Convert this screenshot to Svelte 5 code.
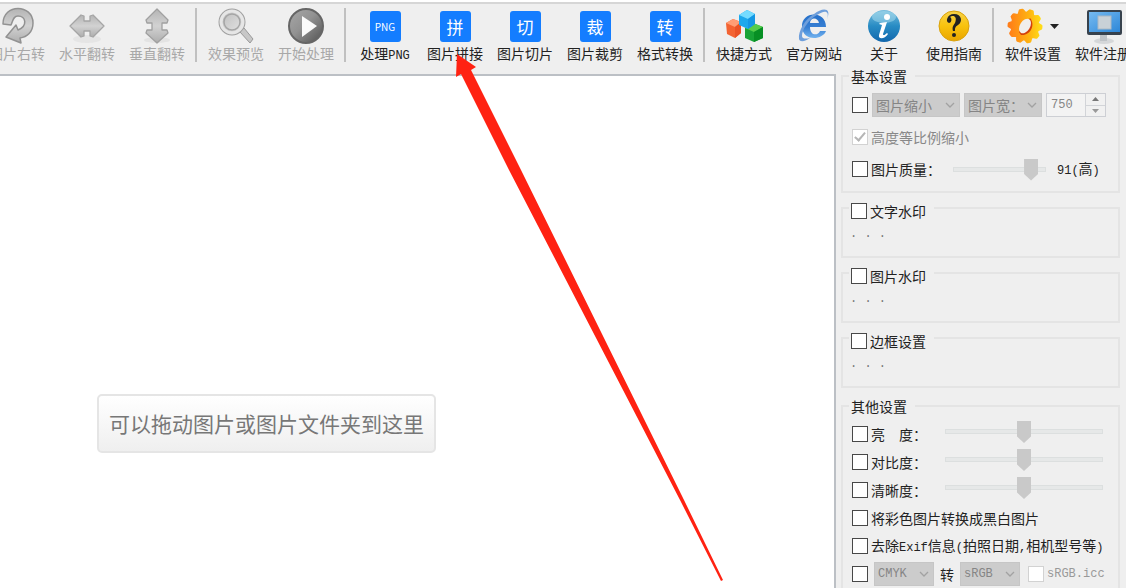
<script lang="ts">
	type Tool = { id: string; label: string; latin?: string; glyph?: string; disabled?: boolean; menu?: boolean };

	const groups: Tool[][] = [
		[
			{ id: 'rotate', label: '图片右转', disabled: true },
			{ id: 'flip-h', label: '水平翻转', disabled: true },
			{ id: 'flip-v', label: '垂直翻转', disabled: true }
		],
		[
			{ id: 'preview', label: '效果预览', disabled: true },
			{ id: 'start', label: '开始处理', disabled: true }
		],
		[
			{ id: 'png', label: '处理', latin: 'PNG', glyph: 'PNG' },
			{ id: 'join', label: '图片拼接', glyph: '拼' },
			{ id: 'slice', label: '图片切片', glyph: '切' },
			{ id: 'crop', label: '图片裁剪', glyph: '裁' },
			{ id: 'convert', label: '格式转换', glyph: '转' }
		],
		[
			{ id: 'shortcut', label: '快捷方式' },
			{ id: 'site', label: '官方网站' },
			{ id: 'about', label: '关于' },
			{ id: 'guide', label: '使用指南' }
		],
		[
			{ id: 'settings', label: '软件设置', menu: true },
			{ id: 'register', label: '软件注册' }
		]
	];

	const toggles = ['文字水印', '图片水印', '边框设置'];
	const adjustments = ['亮　度：', '对比度：', '清晰度：'];

	// gear outline: ten teeth round the centre
	const gear = Array.from({ length: 40 }, (_, i) => {
		const a = (i * Math.PI) / 20;
		const r = i % 4 < 2 ? 16 : 13;
		return `${(18 + r * Math.cos(a)).toFixed(1)},${(18 + r * Math.sin(a)).toFixed(1)}`;
	}).join(' ');

	let width = $state(750);
	let quality = $state(91);
</script>

{#snippet chevron()}
	<svg class="chevron" width="10" height="6" viewBox="0 0 10 6" fill="none" stroke="#a2a2a2" stroke-width="1.3">
		<path d="M1 1l4 4 4-4" />
	</svg>
{/snippet}

{#snippet icon(id: string)}
	<svg width="36" height="36" viewBox="0 0 36 36" aria-hidden="true">
		{#if id === 'rotate'}
			<path d="M4 16C4-5 34-4 34 15c0 9-6 14-13 15l1 5L7 29l10-12 2 5c10-4 8-14 0-14-5 0-5 5-7 9z" fill="url(#silver)" stroke="#929292" stroke-width="1.5" stroke-linejoin="round" />
		{:else if id === 'flip-h'}
			<ellipse cx="18" cy="31" rx="14" ry="4" fill="#e5e5e5" />
			<path d="M1 18L12 7l3 1v5h6V8l3-1 11 11-11 11-3-1v-5h-6v5l-3 1z" fill="url(#silver)" stroke="#a5a5a5" stroke-width="1.3" stroke-linejoin="round" />
		{:else if id === 'flip-v'}
			<ellipse cx="18" cy="32" rx="13" ry="3" fill="#e3e3e3" />
			<path d="M18 1l11 11-1 3h-5v7h5l1 3-11 10L7 25l1-3h5v-7H8l-1-3z" fill="url(#silver)" stroke="#a0a0a0" stroke-width="1.3" stroke-linejoin="round" />
		{:else if id === 'preview'}
			<path d="M22 24l4-4 9 11-3 4z" fill="#c7c7c7" stroke="#999" />
			<circle cx="14" cy="14" r="11" fill="#d2d2d2" stroke="#a0a0a0" stroke-width="5" />
			<circle cx="14" cy="14" r="11" fill="url(#lens)" stroke="#e6e6e6" stroke-width="3" />
			<circle cx="14" cy="14" r="8" fill="none" stroke="#a5a5a5" stroke-width="1.5" />
		{:else if id === 'start'}
			<circle cx="18" cy="18" r="17" fill="url(#steel)" stroke="#666" stroke-width="2" />
			<path d="M14 8l15 10-15 11z" fill="#fafafa" />
		{:else if id === 'shortcut'}
			<path d="M0 15l7-4 8 3v11l-6 5-8-4z" fill="#f36332" />
			<path d="M0 15l7-4 8 3-6 5z" fill="#ff9d75" />
			<path d="M9 19l6-5v11l-6 5z" fill="#ea5226" />
			<path d="M19 20l8-5 10 4v11l-9 4-9-4z" fill="#18a336" />
			<path d="M19 20l8-5 10 4-9 5z" fill="#55cc4a" />
			<path d="M28 24l9-5v11l-9 4z" fill="#078f24" />
			<path d="M13 7l8-5 8 4v10l-7 5-9-4z" fill="#1da8ec" />
			<path d="M13 7l8-5 8 4-7 5z" fill="#75dcff" />
			<path d="M22 11l7-5v10l-7 5z" fill="#1497e4" />
		{:else if id === 'site'}
			<path d="M30 23C27 32 7 34 6 19 5 3 30 2 30 19H14c0 9 8 9 10 4zM14 15h9c-1-6-9-6-9 0z" fill="url(#blue)" fill-rule="evenodd" />
			<path d="M31 11C36 0 27-1 18 6 9 11 2 23 3 31c1 4 7 2 11-1-4 1-8 1-8-2C6 22 12 12 21 7c7-5 13-5 10 4z" fill="#6f9fdb" />
		{:else if id === 'about'}
			<circle cx="18" cy="18" r="16" fill="url(#info)" />
			<ellipse cx="18" cy="9" rx="12" ry="6" fill="#b9e6f5" opacity=".45" />
			<circle cx="21" cy="9" r="3" fill="#fff" />
			<path d="M14 15l7-1-4 12c0 2 2 1 4-1l1 1c-3 5-10 6-9 1l3-10-3-1z" fill="#fff" />
		{:else if id === 'guide'}
			<circle cx="18" cy="18" r="15" fill="url(#gold)" stroke="#d9a20c" />
			<path d="M13 15c-4-1-2-9 5-9 8 0 9 8 4 11-3 2-3 3-3 6h-2c-1-4 0-5 2-8 2-5 0-7-2-7-3 0-3 1-2 2 1 2 0 5-2 5z" fill="#222" />
			<circle cx="18" cy="27" r="2" fill="#222" />
		{:else if id === 'settings'}
			<polygon points={gear} fill="url(#orange)" stroke="url(#orange)" stroke-width="3" stroke-linejoin="round" />
			<path d="M23 10c6 7 0 18-9 17l-2-3z" fill="#d4420b" />
			<ellipse cx="18" cy="18" rx="5" ry="8" transform="rotate(32 18 18)" fill="#f1efec" />
		{:else if id === 'register'}
			<ellipse cx="19" cy="33" rx="10" ry="3" fill="#d5d7d9" />
			<path d="M15 27h7v6h-7z" fill="#bfc3c7" />
			<rect x="2" y="2" width="35" height="25" rx="2" fill="#37424d" />
			<rect x="4" y="4" width="31" height="20" fill="url(#screen)" />
			<rect x="13" y="8" width="13" height="13" fill="#c9d1d7" stroke="#a9b8c4" />
		{/if}
	</svg>
{/snippet}

<svg class="defs" width="0" height="0" aria-hidden="true">
	<defs>
		<linearGradient id="silver" x2="0" y2="1"><stop stop-color="#b4b4b4" /><stop offset=".5" stop-color="#d2d2d2" /><stop offset="1" stop-color="#adadad" /></linearGradient>
		<linearGradient id="lens" x2="1" y2="1"><stop stop-color="#bcbcbc" /><stop offset="1" stop-color="#e5e5e5" /></linearGradient>
		<linearGradient id="steel" x2="1" y2="1"><stop stop-color="#a8a8a8" /><stop offset=".45" stop-color="#929292" /><stop offset="1" stop-color="#505050" /></linearGradient>
		<linearGradient id="blue" x2="0" y2="1"><stop stop-color="#2670c9" /><stop offset=".55" stop-color="#377fd3" /><stop offset="1" stop-color="#72b3ef" /></linearGradient>
		<linearGradient id="info" x2="0" y2="1"><stop stop-color="#78bddd" /><stop offset=".5" stop-color="#288cc4" /><stop offset="1" stop-color="#1267ad" /></linearGradient>
		<linearGradient id="gold" x2="0" y2="1"><stop stop-color="#f8d249" /><stop offset=".5" stop-color="#f8c20d" /><stop offset="1" stop-color="#e9a500" /></linearGradient>
		<linearGradient id="orange" x2="1"><stop stop-color="#ff7d18" /><stop offset=".6" stop-color="#ffb111" /><stop offset="1" stop-color="#ffdc18" /></linearGradient>
		<linearGradient id="screen" x2="1" y2="1"><stop stop-color="#76baf0" /><stop offset="1" stop-color="#2d87d8" /></linearGradient>
	</defs>
</svg>

<div class="app">
	<header class="toolbar">
		{#each groups as group, g}
			{#if g > 0}
				<span class="separator"></span>
			{/if}
			{#each group as tool}
				<button class="tool" disabled={tool.disabled}>
					<span class="tool-icon">
						{#if tool.glyph}
							<span class="tile" class:small={tool.id === 'png'}>{tool.glyph}</span>
						{:else}
							{@render icon(tool.id)}
						{/if}
						{#if tool.menu}
							<svg width="9" height="5" viewBox="0 0 9 5"><path d="M0 0h9L4.500 5z" fill="#222" /></svg>
						{/if}
					</span>
					<span class="tool-label">{tool.label}{#if tool.latin}<span class="latin">{tool.latin}</span>{/if}</span>
				</button>
			{/each}
		{/each}
	</header>

	<div class="body">
		<main class="canvas">
			<div class="drop-hint">可以拖动图片或图片文件夹到这里</div>
		</main>

		<aside class="panel">
			<fieldset class="basic">
				<legend>基本设置</legend>
				<div class="row">
					<input type="checkbox" aria-label="启用缩放" />
					<span class="select mode">
						<select disabled aria-label="缩放方式"><option>图片缩小</option></select>
						{@render chevron()}
					</span>
					<span class="select side">
						<select disabled aria-label="缩放基准"><option>图片宽：</option></select>
						{@render chevron()}
					</span>
					<span class="spin">
						<input type="number" disabled bind:value={width} aria-label="宽度" />
						<span class="steps">
							<button disabled aria-label="增加"><svg width="7" height="4" viewBox="0 0 7 4"><path d="M0 4h7L3.500 0z" fill="#777" /></svg></button>
							<button disabled aria-label="减少"><svg width="7" height="4" viewBox="0 0 7 4"><path d="M0 0h7L3.500 4z" fill="#999" /></svg></button>
						</span>
					</span>
				</div>
				<div class="row">
					<label class="off"><input type="checkbox" checked disabled />高度等比例缩小</label>
				</div>
				<div class="row">
					<label><input type="checkbox" />图片质量：</label>
					<input class="quality" type="range" disabled bind:value={quality} aria-label="图片质量" />
					<output><span class="latin">{quality}(</span>高<span class="latin">)</span></output>
				</div>
			</fieldset>

			{#each toggles as name}
				<fieldset class="toggle">
					<legend><label><input type="checkbox" />{name}</label></legend>
					<p class="latin">· · ·</p>
				</fieldset>
			{/each}

			<fieldset class="other">
				<legend>其他设置</legend>
				{#each adjustments as name}
					<div class="row">
						<label><input type="checkbox" />{name}</label>
						<input class="level" type="range" disabled value="50" aria-label={name} />
					</div>
				{/each}
				<div class="row">
					<label><input type="checkbox" />将彩色图片转换成黑白图片</label>
				</div>
				<div class="row">
					<label><input type="checkbox" /><span>去除<span class="latin">Exif</span>信息<span class="latin">(</span>拍照日期<span class="latin">,</span>相机型号等<span class="latin">)</span></span></label>
				</div>
				<div class="row profile">
					<input type="checkbox" aria-label="转换颜色空间" />
					<span class="select space">
						<select disabled aria-label="源颜色空间"><option>CMYK</option></select>
						{@render chevron()}
					</span>
					<span>转</span>
					<span class="select space">
						<select disabled aria-label="目标颜色空间"><option>sRGB</option></select>
						{@render chevron()}
					</span>
					<label class="off icc"><input type="checkbox" disabled /><span class="latin">sRGB.icc</span></label>
				</div>
			</fieldset>
		</aside>
	</div>

	<svg class="pointer" width="270" height="530" viewBox="455 52 270 530" aria-hidden="true">
		<path d="M457 54l19 13-5 3 50 100 163 330 39 80-2 1-41-81L509 170 461 74l-5 3z" fill="#ff2212" />
	</svg>
</div>

<style>
	:global(body) {
		margin: 0;
		background: #efefef;
	}

	.defs {
		position: absolute;
	}

	.app {
		position: relative;
		display: flex;
		flex-direction: column;
		min-height: 100vh;
		box-sizing: border-box;
		border-top: 2px solid #fff;
		overflow: hidden;
		background: #efefef;
		color: #222;
		font-family: "Noto Sans CJK SC", sans-serif;
		font-size: 14px;
		line-height: 16px;
	}

	button,
	input,
	select {
		font: inherit;
		color: inherit;
		margin: 0;
	}

	.latin {
		font-family: "Liberation Mono", monospace;
		font-size: 12px;
	}

	.toolbar {
		display: flex;
		flex-shrink: 0;
		padding-top: 4px;
		margin-left: -18px;
		border-top: 2px solid #d6d6d6;
	}

	.tool {
		display: flex;
		flex-direction: column;
		align-items: center;
		gap: 1px;
		flex: 0 0 70px;
		padding: 0;
		border: 0;
		background: none;
		white-space: nowrap;
	}

	.tool:disabled {
		color: #a8a8a8;
	}

	.tool-icon {
		display: flex;
		align-items: center;
		justify-content: center;
		gap: 7px;
		height: 36px;
	}

	.tool-icon svg {
		display: block;
		overflow: visible;
	}

	.tile {
		width: 31px;
		line-height: 31px;
		border-radius: 3px;
		background: #147dff;
		color: #fff;
		font-size: 17px;
		text-align: center;
	}

	.tile.small {
		font-size: 10px;
	}

	.separator {
		flex: 0 0 2px;
		height: 54px;
		margin: 0 4px 0 3px;
		background: #c0c0c0;
	}

	.body {
		display: flex;
		flex: 1;
		padding-top: 4px;
	}

	.canvas {
		flex: 1;
		margin-top: 6px;
		padding: 318px 0 0 97px;
		border-top: 2px solid #bcc0c5;
		border-right: 2px solid #bcc0c5;
		background: #fff;
	}

	.drop-hint {
		width: max-content;
		padding: 14px 10px;
		border: 2px solid #e5e5e5;
		border-radius: 5px;
		background: linear-gradient(#fff, #efefef);
		color: #777;
		font-size: 21px;
		line-height: 27px;
	}

	.panel {
		display: flex;
		flex-direction: column;
		width: 290px;
		flex-shrink: 0;
		box-sizing: border-box;
		padding: 0 6px 0 5px;
	}

	fieldset {
		min-width: 0;
		margin: 0;
		padding: 9px 15px 10px 9px;
		border: 2px solid #e4e4e4;
	}

	legend {
		padding: 0 8px 0 2px;
		margin-left: -3px;
	}

	.toggle {
		margin-top: 4px;
		padding-top: 10px;
		padding-bottom: 11px;
	}

	.toggle legend {
		padding-top: 6px;
	}

	.toggle p {
		margin: 0 0 0 -2px;
		color: #777;
	}

	.other {
		flex: 1;
		margin-top: 10px;
		padding-top: 8px;
		padding-bottom: 0;
		border-bottom: 0;
	}

	.row {
		display: flex;
		align-items: center;
		gap: 4px;
		height: 24px;
		white-space: nowrap;
	}

	.row + .row {
		margin-top: 4px;
	}

	.basic .row + .row {
		margin-top: 8px;
	}

	label {
		display: flex;
		align-items: center;
		gap: 3px;
	}

	.off {
		color: #888;
	}

	input[type='checkbox'] {
		appearance: none;
		position: relative;
		flex: 0 0 16px;
		height: 16px;
		box-sizing: border-box;
		border: 1px solid #484848;
		background: #fff;
	}

	input[type='checkbox']:disabled {
		border-color: #d2d2d2;
	}

	input[type='checkbox']:checked::after {
		content: '';
		position: absolute;
		left: 4px;
		top: 0;
		width: 4px;
		height: 9px;
		border: solid #b5b5b5;
		border-width: 0 2px 2px 0;
		transform: rotate(40deg);
	}

	.select {
		position: relative;
		flex-shrink: 0;
	}

	select {
		appearance: none;
		display: block;
		width: 100%;
		height: 24px;
		padding: 0 0 0 3px;
		border: 1px solid #c6c6c6;
		border-radius: 0;
		background: #ccc;
		color: #858585;
		opacity: 1;
	}

	.chevron {
		position: absolute;
		right: 5px;
		top: 9px;
		pointer-events: none;
	}

	.mode {
		width: 88px;
	}

	.side {
		width: 78px;
	}

	.space {
		width: 60px;
	}

	.space select {
		font-family: "Liberation Mono", monospace;
		font-size: 12px;
	}

	.spin {
		display: flex;
		width: 60px;
		height: 24px;
		box-sizing: border-box;
		border: 1px solid #cdcfd4;
		background: #f3f3f3;
	}

	.spin input {
		appearance: textfield;
		flex: 1;
		min-width: 0;
		padding: 0 0 0 4px;
		border: 0;
		background: none;
		color: #858585;
		font-family: "Liberation Mono", monospace;
		font-size: 12px;
	}

	.spin input::-webkit-inner-spin-button {
		display: none;
	}

	.steps {
		display: flex;
		flex-direction: column;
		width: 19px;
		border-left: 1px solid #d2d4d8;
	}

	.steps button {
		display: flex;
		flex: 1;
		align-items: center;
		justify-content: center;
		padding: 0;
		border: 0;
		background: #f1f1f1;
	}

	.steps button + button {
		border-top: 1px solid #d2d4d8;
	}

	input[type='range'] {
		appearance: none;
		height: 22px;
		margin-left: auto;
		background: none;
	}

	input[type='range']::-webkit-slider-runnable-track {
		height: 5px;
		box-sizing: border-box;
		border: 1px solid #dcdfdf;
		background: #e6e8e8;
	}

	input[type='range']::-webkit-slider-thumb {
		appearance: none;
		width: 14px;
		height: 22px;
		margin-top: -9px;
		background: #c9c9c9;
		clip-path: polygon(0 0, 100% 0, 100% 70%, 50% 100%, 0 70%);
	}

	.quality {
		width: 93px;
	}

	.level {
		width: 158px;
		margin-bottom: 5px;
	}

	output {
		width: 46px;
		margin-left: 7px;
	}

	.profile {
		gap: 6px;
	}

	.icc {
		margin-left: 2px;
	}

	.icc .latin {
		color: #999;
	}

	.pointer {
		position: absolute;
		left: 455px;
		top: 50px;
		pointer-events: none;
	}
</style>
